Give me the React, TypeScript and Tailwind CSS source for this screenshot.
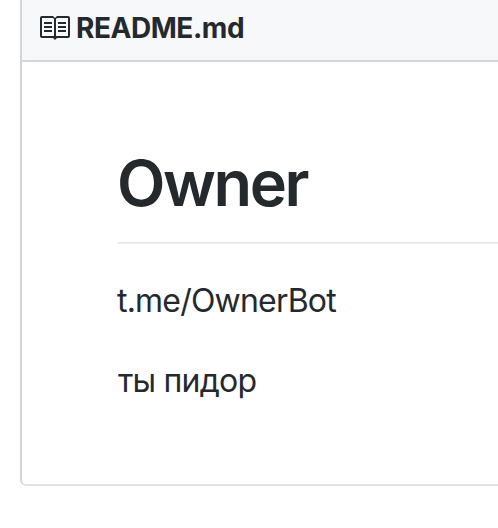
const BookIcon = () => (
  <svg
    viewBox="0 0 16 16"
    className="h-8 w-8 shrink-0 fill-[#24292e]"
    aria-hidden="true"
  >
    <path
      fillRule="evenodd"
      d="M3 5h4v1H3V5zm0 3h4V7H3v1zm0 2h4V9H3v1zm11-5h-4v1h4V5zm0 2h-4v1h4V7zm0 2h-4v1h4V9zm2-6v9c0 .55-.45 1-1 1H9.500l-1 1-1-1H2c-.55 0-1-.45-1-1V3c0-.55.45-1 1-1h5.500l1 1 1-1H15c.55 0 1 .45 1 1zm-8 .5L7.500 3H2v9h6V3.500zm7-.5H9.500l-.5.5V12h6V3z"
    />
  </svg>
);

export default function App() {
  return (
    <div className="h-[528px] overflow-hidden bg-white pl-5 font-[Inter,'Liberation_Sans',sans-serif] text-[#24292e]">
      <section className="h-[486px] w-[520px] rounded-bl-md border-2 border-t-0 border-[#d1d5da] border-b-[#dfe1e3]">
        <header className="flex h-[62px] items-start border-b-2 border-[#d1d5da] bg-[#f6f8fa] pt-3 pl-4">
          <BookIcon />
          <h3 className="ml-1.5 text-[28px] leading-8 font-[650] tracking-[-0.45px]">
            README.md
          </h3>
        </header>
        <article className="pt-[81px] pl-24">
          <h1 className="h-[101px] border-b-2 border-[#eaecef] indent-[-1px] text-[63px] leading-[80px] font-semibold tracking-[-2.4px]">
            Owner
          </h1>
          <p className="mt-[33px] indent-[-1px] text-[32px] leading-[48px] tracking-[-0.8px]">
            t.me/OwnerBot
          </p>
          <p className="mt-8 text-[32px] leading-[48px] tracking-[-0.8px]">
            ты пидор
          </p>
        </article>
      </section>
    </div>
  );
}
